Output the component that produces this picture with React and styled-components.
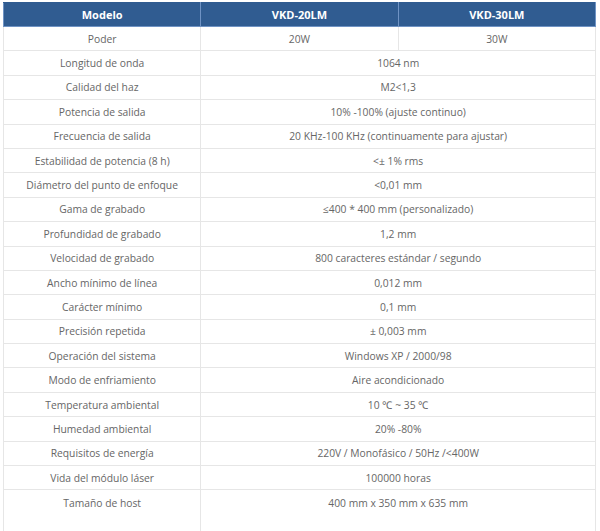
import React from 'react';
import styled, { createGlobalStyle } from 'styled-components';

const GlobalStyle = createGlobalStyle`
  body {
    margin: 0;
    background: #fff;
    font-family: "Open Sans", "Noto Sans", sans-serif;
  }
`;

const Wrap = styled.div`
  padding: 2px 4px 0 3px;
`;

const Table = styled.table`
  width: 593px;
  border-collapse: collapse;
  table-layout: fixed;
  border: 1px solid #e3e3e3;
`;

const HeadCell = styled.th`
  height: 23px;
  padding: 0;
  background: #305c91;
  color: #fff;
  font-size: 11px;
  font-weight: 700;
  text-align: center;
  border: 1px solid #6f93c4;
  border-top-color: #305c91;
`;

const Cell = styled.td`
  height: ${p => (p.tall ? '38px' : '23.4px')};
  padding: ${p => (p.tall ? '6px 0 0' : '0')};
  vertical-align: ${p => (p.tall ? 'top' : 'middle')};
  font-size: 10.3px;
  color: #666;
  text-align: center;
  border: 1px solid #e6e6e6;
  white-space: nowrap;
`;

const rows = [
  ['Longitud de onda', '1064 nm'],
  ['Calidad del haz', 'M2<1,3'],
  ['Potencia de salida', '10% -100% (ajuste continuo)'],
  ['Frecuencia de salida', '20 KHz-100 KHz (continuamente para ajustar)'],
  ['Estabilidad de potencia (8 h)', '<± 1% rms'],
  ['Diámetro del punto de enfoque', '<0,01 mm'],
  ['Gama de grabado', '≤400 * 400 mm (personalizado)'],
  ['Profundidad de grabado', '1,2 mm'],
  ['Velocidad de grabado', '800 caracteres estándar / segundo'],
  ['Ancho mínimo de línea', '0,012 mm'],
  ['Carácter mínimo', '0,1 mm'],
  ['Precisión repetida', '± 0,003 mm'],
  ['Operación del sistema', 'Windows XP / 2000/98'],
  ['Modo de enfriamiento', 'Aire acondicionado'],
  ['Temperatura ambiental', '10 ℃ ~ 35 ℃'],
  ['Humedad ambiental', '20% -80%'],
  ['Requisitos de energía', '220V / Monofásico / 50Hz /<400W'],
  ['Vida del módulo láser', '100000 horas'],
];

export default function App() {
  return (
    <Wrap>
      <GlobalStyle />
      <Table>
        <thead>
          <tr>
            <HeadCell>Modelo</HeadCell>
            <HeadCell>VKD-20LM</HeadCell>
            <HeadCell>VKD-30LM</HeadCell>
          </tr>
        </thead>
        <tbody>
          <tr>
            <Cell>Poder</Cell>
            <Cell>20W</Cell>
            <Cell>30W</Cell>
          </tr>
          {rows.map(([k, v]) => (
            <tr key={k}>
              <Cell>{k}</Cell>
              <Cell colSpan={2}>{v}</Cell>
            </tr>
          ))}
          <tr>
            <Cell tall>Tamaño de host</Cell>
            <Cell tall colSpan={2}>400 mm x 350 mm x 635 mm</Cell>
          </tr>
        </tbody>
      </Table>
    </Wrap>
  );
}
